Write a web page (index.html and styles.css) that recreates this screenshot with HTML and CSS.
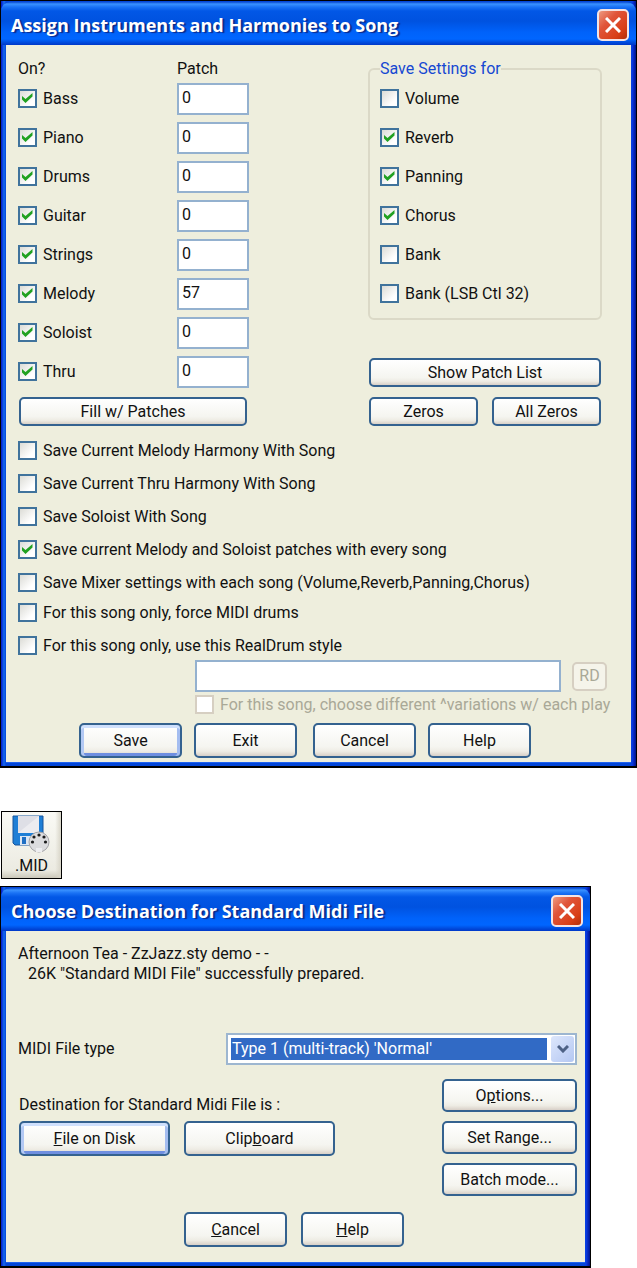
FILE: index.html
```html
<!DOCTYPE html>
<html lang="en">
<head>
<meta charset="utf-8">
<title>Assign Instruments and Harmonies to Song</title>
<link rel="stylesheet" href="styles.css">
</head>
<body>
<section class="window">
  <header class="titlebar">
    <h1 class="title">Assign Instruments and Harmonies to Song</h1>
    <button class="close" aria-label="Close"><svg viewBox="0 0 16 16" width="16" height="16"><path d="M1 1 15 15M15 1 1 15" stroke="#fff" stroke-width="3"/></svg></button>
  </header>
  <form class="pane">
    <div class="columns">
      <div class="parts">
        <div class="row head"><span>On?</span><span>Patch</span></div>
        <div class="row"><label class="check"><input type="checkbox" checked>Bass</label><input class="text" aria-label="Bass patch" value="0"></div>
        <div class="row"><label class="check"><input type="checkbox" checked>Piano</label><input class="text" aria-label="Piano patch" value="0"></div>
        <div class="row"><label class="check"><input type="checkbox" checked>Drums</label><input class="text" aria-label="Drums patch" value="0"></div>
        <div class="row"><label class="check"><input type="checkbox" checked>Guitar</label><input class="text" aria-label="Guitar patch" value="0"></div>
        <div class="row"><label class="check"><input type="checkbox" checked>Strings</label><input class="text" aria-label="Strings patch" value="0"></div>
        <div class="row"><label class="check"><input type="checkbox" checked>Melody</label><input class="text" aria-label="Melody patch" value="57"></div>
        <div class="row"><label class="check"><input type="checkbox" checked>Soloist</label><input class="text" aria-label="Soloist patch" value="0"></div>
        <div class="row"><label class="check"><input type="checkbox" checked>Thru</label><input class="text" aria-label="Thru patch" value="0"></div>
        <button type="button" class="btn small fill">Fill w/ Patches</button>
      </div>
      <div class="settings">
        <fieldset class="group">
          <legend>Save Settings for</legend>
          <div class="row"><label class="check"><input type="checkbox">Volume</label></div>
          <div class="row"><label class="check"><input type="checkbox" checked>Reverb</label></div>
          <div class="row"><label class="check"><input type="checkbox" checked>Panning</label></div>
          <div class="row"><label class="check"><input type="checkbox" checked>Chorus</label></div>
          <div class="row"><label class="check"><input type="checkbox">Bank</label></div>
          <div class="row"><label class="check"><input type="checkbox">Bank (LSB Ctl 32)</label></div>
        </fieldset>
        <div class="patch-buttons">
          <button type="button" class="btn small wide">Show Patch List</button>
          <button type="button" class="btn small">Zeros</button>
          <button type="button" class="btn small">All Zeros</button>
        </div>
      </div>
    </div>
    <div class="options">
      <label class="check"><input type="checkbox">Save Current Melody Harmony With Song</label>
      <label class="check"><input type="checkbox">Save Current Thru Harmony With Song</label>
      <label class="check"><input type="checkbox">Save Soloist With Song</label>
      <label class="check"><input type="checkbox" checked>Save current Melody and Soloist patches with every song</label>
      <label class="check"><input type="checkbox">Save Mixer settings with each song (Volume,Reverb,Panning,Chorus)</label>
    </div>
    <div class="options drums">
      <label class="check"><input type="checkbox">For this song only, force MIDI drums</label>
      <label class="check"><input type="checkbox">For this song only, use this RealDrum style</label>
    </div>
    <div class="style-pick">
      <input class="text" aria-label="RealDrum style">
      <button type="button" class="btn small" disabled>RD</button>
    </div>
    <label class="check variations"><input type="checkbox" disabled>For this song, choose different ^variations w/ each play</label>
    <div class="actions">
      <button type="button" class="btn default">Save</button>
      <button type="button" class="btn">Exit</button>
      <button type="button" class="btn">Cancel</button>
      <button type="button" class="btn">Help</button>
    </div>
  </form>
</section>

<button class="tool">
  <svg viewBox="0 0 40 38" width="40" height="38">
    <path d="M1 1h30v29H3l-2-2z" fill="#1f7fd6" stroke="#17549c"/>
    <path d="M6 1h21v17H6z" fill="#dedfe6"/>
    <path d="M6 18 27 1v17z" fill="#ececf0"/>
    <path d="M8 21h18v9H8z" fill="#dce6f2"/>
    <path d="M10 22h4v7h-4z" fill="#1f6fc4"/>
    <circle cx="27" cy="27" r="10" fill="#dcdcde" stroke="#a4a4a8"/>
    <path d="M24 37v-4h6v4z" fill="#eeeef0"/>
    <g fill="#1c1c1c"><circle cx="20.500" cy="27" r="1.600"/><circle cx="22" cy="22" r="1.600"/><circle cx="27" cy="20" r="1.600"/><circle cx="32" cy="22" r="1.600"/><circle cx="33.500" cy="27" r="1.600"/></g>
  </svg>
  <span>.MID</span>
</button>

<section class="window export">
  <header class="titlebar">
    <h2 class="title">Choose Destination for Standard Midi File</h2>
    <button class="close" aria-label="Close"><svg viewBox="0 0 16 16" width="16" height="16"><path d="M1 1 15 15M15 1 1 15" stroke="#fff" stroke-width="3"/></svg></button>
  </header>
  <form class="pane">
    <p class="message">Afternoon Tea - ZzJazz.sty demo - -<br><span class="indent">26K "Standard MIDI File" successfully prepared.</span></p>
    <div class="type">
      <label for="type">MIDI File type</label>
      <div class="combo">
        <select id="type"><option>Type 1 (multi-track) 'Normal'</option></select>
        <span class="arrow"><svg viewBox="0 0 12 8" width="12" height="8"><path d="M1 1 6 6 11 1" fill="none" stroke="#4d6185" stroke-width="3"/></svg></span>
      </div>
    </div>
    <div class="destination">
      <div class="targets">
        <p>Destination for Standard Midi File is :</p>
        <div class="target-buttons">
          <button type="button" class="btn default"><u>F</u>ile on Disk</button>
          <button type="button" class="btn">Clip<u>b</u>oard</button>
        </div>
      </div>
      <div class="extras">
        <button type="button" class="btn">O<u>p</u>tions...</button>
        <button type="button" class="btn">Set Range...</button>
        <button type="button" class="btn">Batch mode...</button>
      </div>
    </div>
    <div class="actions">
      <button type="button" class="btn"><u>C</u>ancel</button>
      <button type="button" class="btn"><u>H</u>elp</button>
    </div>
  </form>
</section>
</body>
</html>
```
FILE: styles.css
```css
* { box-sizing: border-box; }

body {
  margin: 0;
  background: #fff;
  color: #111;
  font: 16px/20px Roboto, "Liberation Sans", sans-serif;
}

button, input, select { font: inherit; color: inherit; }
p { margin: 0; }

/* Window frame */
.window {
  border: 1px solid #000;
  background: #000 linear-gradient(90deg, #0019c8, #166aee 3px, #0346d8 5px, #0346d8 calc(100% - 5px), #0a3be8 calc(100% - 4px), #00138c);
  padding: 1px 5px 4px;
  border-bottom-width: 2px;
}

.titlebar {
  display: flex;
  align-items: center;
  justify-content: space-between;
  height: 43px;
  margin: 0 -5px;
  padding: 2px 7px 0 10px;
  border-radius: 9px 9px 0 0;
  background: linear-gradient(#0a4bd0, #3a92ff 2px, #1a72f5 5px, #0257e6 9px, #0052e0 19px, #0062fa 30px, #0066ff 37px, #0047d8 41px, #0038c8);
}

.title {
  margin: 0;
  color: #fff;
  font: bold 18px/24px "Open Sans", sans-serif;
  text-shadow: 2px 1px 1px #0b2a8a;
}

.close {
  display: grid;
  place-items: center;
  width: 32px;
  height: 32px;
  padding: 0;
  border: 2px solid #f4e4e4;
  border-radius: 5px;
  background: linear-gradient(135deg, #ee9a80, #e0553a 35%, #d93f17 75%, #b32f0a);
}

.pane { background: #eeeedd; box-shadow: 0 1px #1f62f0; }

/* Controls */
.check { display: flex; align-items: center; gap: 6px; height: 19px; white-space: nowrap; }

.check input {
  appearance: none;
  flex: none;
  width: 19px;
  height: 19px;
  margin: 0;
  border: 2px solid #40739c;
  background: linear-gradient(135deg, #dcdcd6, #fff 75%);
}

.check input:checked {
  background: url("data:image/svg+xml,%3Csvg xmlns='http://www.w3.org/2000/svg' viewBox='0 0 15 15'%3E%3Cpath d='M2 5 5.500 8 12.500 2V5.500L5.500 12 2 8.500z' fill='%2321a121'/%3E%3C/svg%3E") center / 15px, linear-gradient(135deg, #dcdcd6, #fff 75%);
}

.check input:disabled { border-color: #d6cfc2; background: #fff; }

.text {
  min-width: 0;
  height: 32px;
  padding: 0 3px 3px;
  border: 2px solid #94b1cf;
  border-radius: 0;
  background: #fff;
}

.btn {
  height: 35px;
  padding: 0 4px;
  border: 2px solid #34628f;
  border-radius: 5px;
  background: linear-gradient(#fff, #f5f5f0 70%, #eeece4 85%, #d8d0c8);
  white-space: nowrap;
}

.btn.small { height: 29px; }
.btn.default { box-shadow: inset 0 3px #cfe0fd, inset 3px 0 #b3c9f4, inset -3px 0 #a4bdf0, inset 0 -3px #6f8fe0; }
.btn:disabled { border-color: #d6cfc2; background: #f5f4ea; color: #a9a897; }

/* Instruments window */
.columns { display: grid; grid-template-columns: 1fr 234px; padding: 13px 29px 0 12px; }
.row { display: grid; grid-template-columns: 159px 72px; align-items: center; height: 39px; }
.row.head { height: 21px; }
.fill { width: 228px; margin: 6px 0 0 1px; }

.group { margin: 1px 0 0; padding: 0 10px 5px; border: 2px solid #dbd9c7; border-radius: 6px; }
.group legend { height: 20px; margin: 0; padding: 0; color: #1648d2; }
.group .row { grid-template-columns: 1fr; }

.patch-buttons { display: grid; grid-template-columns: 1fr 1fr; gap: 10px 14px; margin-top: 38px; padding: 0 1px; }
.wide { grid-column: 1 / -1; }

.options { display: grid; gap: 14px; padding: 15px 12px 0; }
.options.drums { padding-top: 11px; }

.style-pick { display: grid; grid-template-columns: 1fr 35px; align-items: center; gap: 11px; padding: 5px 24px 0 189px; }
.variations { margin: 3px 0 0 189px; color: #a9a897; }

.actions { display: flex; gap: 12px; padding: 9px 0 4px 73px; }
.actions .btn { width: 103px; }
.actions .btn:nth-child(3) { margin-left: 4px; }

/* Toolbar button */
.tool {
  display: grid;
  justify-items: center;
  width: 61px;
  height: 68px;
  margin: 43px 0 7px 1px;
  padding: 3px 0 0;
  border: 1px solid #000;
  background: linear-gradient(90deg, transparent 90%, #d8d5c8), linear-gradient(#fafaf5, #ecebe2 88%, #cbc8ba);
}

/* Export window */
.export { max-width: 591px; }
.export .pane { padding: 13px 8px 0 12px; }
.indent { padding-left: 10px; }

.type { display: grid; grid-template-columns: 208px 1fr; align-items: center; margin-top: 49px; }
.combo { position: relative; display: grid; }

.combo select {
  appearance: none;
  height: 32px;
  padding: 3px 28px 3px 3px;
  border: 2px solid #9db6d0;
  border-radius: 0;
  background: linear-gradient(#316ac5, #316ac5) content-box, #fff;
  color: #fff;
  text-indent: 1px;
}

.arrow {
  position: absolute;
  top: 3px;
  right: 3px;
  bottom: 3px;
  display: grid;
  place-items: center;
  width: 23px;
  border-radius: 3px;
  background: linear-gradient(135deg, #dde7fc, #b4c7f2);
  pointer-events: none;
}

.destination { display: flex; justify-content: space-between; margin-top: 14px; }
.targets { padding: 16px 0 0 1px; }
.target-buttons { display: grid; grid-template-columns: 151px 151px; gap: 14px; margin-top: 6px; }
.extras { display: grid; gap: 9px; width: 135px; }
.extras .btn { height: 33px; }
.export .actions { gap: 14px; padding: 16px 0 15px 166px; }
```
